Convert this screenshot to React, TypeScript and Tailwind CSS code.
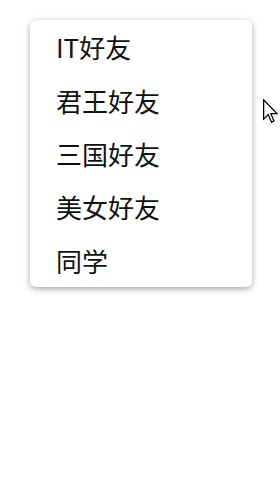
const items = ["IT好友", "君王好友", "三国好友", "美女好友", "同学"];

export default function App() {
  return (
    <div className="relative h-[498px] w-[280px] bg-white">
      <div className="absolute left-[30px] top-[20px] w-[222px] rounded-[6px] bg-white shadow-[0_2px_6px_rgba(0,0,0,0.35)]">
        {items.map((item) => (
          <div
            key={item}
            className="flex h-[53.4px] items-center pl-[26px] text-[26px] text-[#111] [font-family:'Noto_Sans_CJK_SC','Microsoft_YaHei',sans-serif]"
          >
            {item}
          </div>
        ))}
      </div>
      <svg
        className="absolute left-[263px] top-[99px]"
        width="15"
        height="24"
        viewBox="0 0 12 19"
      >
        <path
          d="M0.5 0.5 L0.5 16 L4.2 12.4 L6.8 18.4 L8.8 17.5 L6.3 11.6 L11.2 11.6 Z"
          fill="white"
          stroke="black"
          strokeWidth="1"
          strokeLinejoin="miter"
        />
      </svg>
    </div>
  );
}
